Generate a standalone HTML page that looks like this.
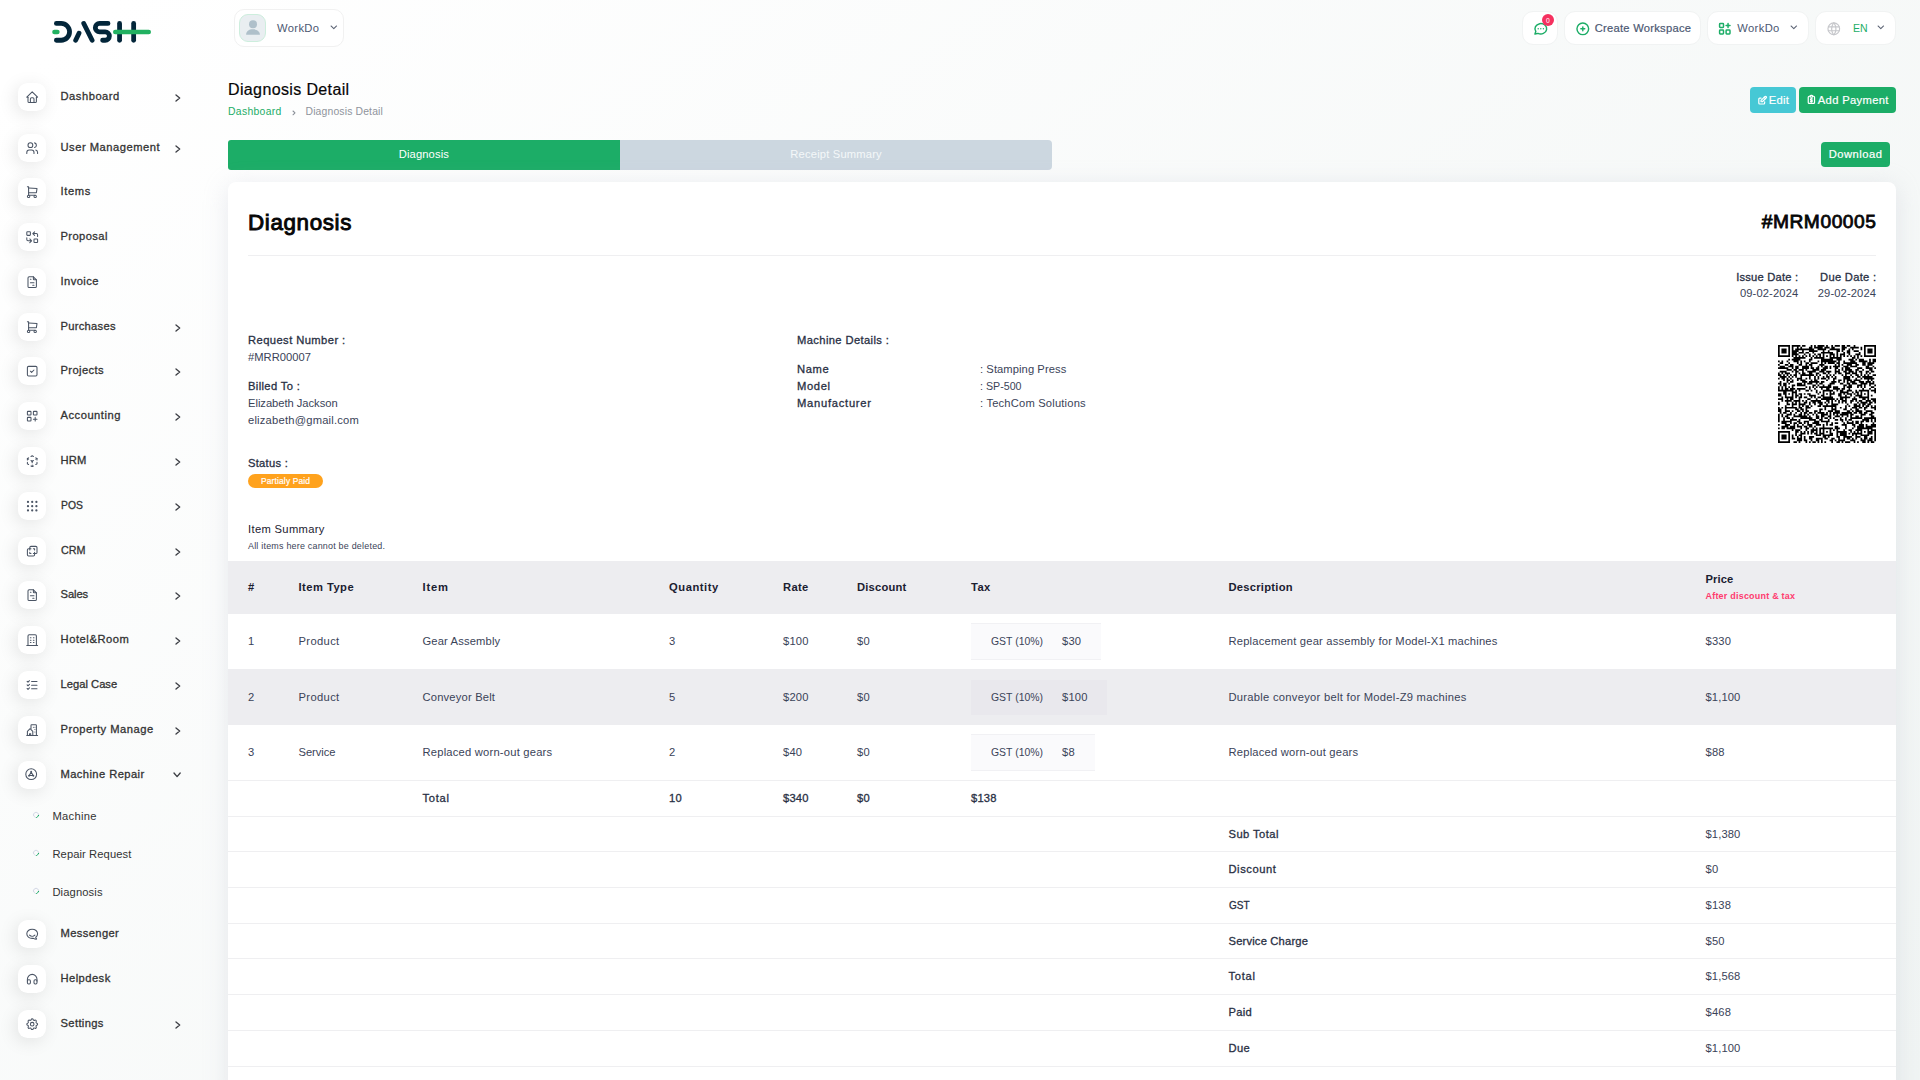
<!DOCTYPE html>
<html lang="en"><head><meta charset="utf-8"><title>Diagnosis Detail</title><style>
*{margin:0;padding:0;box-sizing:content-box}
html,body{width:1920px;height:1080px;overflow:hidden}
body{position:relative;font-family:"Liberation Sans", "DejaVu Sans", sans-serif;background:linear-gradient(141.55deg,rgba(240,244,243,0) 3.46%,#f0f4f3 99.86%),#fff;color:#3a4358;-webkit-font-smoothing:antialiased}
ul{list-style:none}
a{text-decoration:none}
.t{position:absolute;white-space:nowrap;font-weight:400;font-style:normal;display:block}
.mic{background:#fff;border-radius:9.6px;box-shadow:-2.4px 3.2px 18.4px rgba(0,0,0,.1)}
.hbtn{background:#fff;border-radius:10px;border:1px solid #f1f1f1;box-sizing:border-box}
.nb{border-color:#f1f3f3;border-radius:11px}
.cardbg{background:#fff;border-radius:8px;box-shadow:0 4.8px 24px rgba(182,186,203,.3)}
</style></head>
<body>
<nav class="sidebar">
<a class="brand"><svg role="img" aria-label="DASH" style="position:absolute;left:45px;top:14px" width="115" height="36" viewBox="0 0 1920 601"><g fill="none" stroke-linecap="round" stroke-linejoin="round" stroke-width="80" stroke="#03263a"><path d="M190 158H270A140 140 0 0 1 270 438H190"/><path d="M647 158L787 438"/><path d="M568 320L512 438"/><path d="M1052 158H910A70 70 0 0 0 910 298H1005A70 70 0 0 1 1005 438H962"/><path d="M1245 158V438"/><path d="M1480 158V438"/></g><g fill="none" stroke-linecap="round" stroke-width="76" stroke="#22b161"><path d="M158 300H207"/><path d="M1173 300H1732"/></g></svg></a>
<ul class="menu">
<li>
<div class="mic" style="position:absolute;left:18.00px;top:83.00px;width:28.00px;height:28.00px;"><svg style="position:absolute;left:6.85px;top:6.85px;" width="14.40" height="14.40" viewBox="0 0 24 24" fill="none" stroke="#4b5565" stroke-width="1.75" stroke-linecap="round" stroke-linejoin="round"><path d="M5 12H3l9-9 9 9h-2"/><path d="M5 12v7a2 2 0 0 0 2 2h10a2 2 0 0 0 2-2v-7"/><path d="M9 21v-6a2 2 0 0 1 2-2h2a2 2 0 0 1 2 2v6"/></svg></div>
<span class="t" style="top:88.00px;font-size:11.20px;line-height:17px;-webkit-text-stroke:0.30px;color:#333333;left:60.50px;letter-spacing:0.510px;">Dashboard</span>
<svg style="position:absolute;left:173.60px;top:92.80px" width="7.70" height="10.00" viewBox="0 0 7.70 10.00" fill="none" stroke="#3d3f45" stroke-width="1.35" stroke-linecap="round" stroke-linejoin="round"><path d="M2.00 2.00L5.70 5.00L2.00 8.00"/></svg>
</li>
<li>
<div class="mic" style="position:absolute;left:18.00px;top:134.00px;width:28.00px;height:28.00px;"><svg style="position:absolute;left:6.85px;top:6.85px;" width="14.40" height="14.40" viewBox="0 0 24 24" fill="none" stroke="#4b5565" stroke-width="1.75" stroke-linecap="round" stroke-linejoin="round"><circle cx="9" cy="7" r="4"/><path d="M3 21v-2a4 4 0 0 1 4-4h4a4 4 0 0 1 4 4v2"/><path d="M16 3.13a4 4 0 0 1 0 7.75"/><path d="M21 21v-2a4 4 0 0 0-3-3.85"/></svg></div>
<span class="t" style="top:139.00px;font-size:11.20px;line-height:17px;-webkit-text-stroke:0.30px;color:#333333;left:60.50px;letter-spacing:0.507px;">User Management</span>
<svg style="position:absolute;left:173.60px;top:143.80px" width="7.70" height="10.00" viewBox="0 0 7.70 10.00" fill="none" stroke="#3d3f45" stroke-width="1.35" stroke-linecap="round" stroke-linejoin="round"><path d="M2.00 2.00L5.70 5.00L2.00 8.00"/></svg>
</li>
<li>
<div class="mic" style="position:absolute;left:18.00px;top:178.00px;width:28.00px;height:28.00px;"><svg style="position:absolute;left:6.85px;top:6.85px;" width="14.40" height="14.40" viewBox="0 0 24 24" fill="none" stroke="#4b5565" stroke-width="1.75" stroke-linecap="round" stroke-linejoin="round"><circle cx="6" cy="19" r="2"/><circle cx="17" cy="19" r="2"/><path d="M17 17H6V3H4"/><path d="M6 5l14 1-1 7H6"/></svg></div>
<span class="t" style="top:183.00px;font-size:11.20px;line-height:17px;-webkit-text-stroke:0.30px;color:#333333;left:60.50px;letter-spacing:0.609px;">Items</span>
</li>
<li>
<div class="mic" style="position:absolute;left:18.00px;top:223.00px;width:28.00px;height:28.00px;"><svg style="position:absolute;left:6.85px;top:6.85px;" width="14.40" height="14.40" viewBox="0 0 24 24" fill="none" stroke="#4b5565" stroke-width="1.75" stroke-linecap="round" stroke-linejoin="round"><rect x="3" y="3" width="6" height="6" rx="1"/><rect x="15" y="15" width="6" height="6" rx="1"/><path d="M21 11V8a2 2 0 0 0-2-2h-6l3 3m0-6l-3 3"/><path d="M3 13v3a2 2 0 0 0 2 2h6l-3-3m0 6l3-3"/></svg></div>
<span class="t" style="top:228.00px;font-size:11.20px;line-height:17px;-webkit-text-stroke:0.30px;color:#333333;left:60.50px;letter-spacing:0.404px;">Proposal</span>
</li>
<li>
<div class="mic" style="position:absolute;left:18.00px;top:268.00px;width:28.00px;height:28.00px;"><svg style="position:absolute;left:6.85px;top:6.85px;" width="14.40" height="14.40" viewBox="0 0 24 24" fill="none" stroke="#4b5565" stroke-width="1.75" stroke-linecap="round" stroke-linejoin="round"><path d="M14 3v4a1 1 0 0 0 1 1h4"/><path d="M17 21H7a2 2 0 0 1-2-2V5a2 2 0 0 1 2-2h7l5 5v11a2 2 0 0 1-2 2z"/><path d="M9 7h1"/><path d="M9 13h6"/><path d="M13 17h2"/></svg></div>
<span class="t" style="top:273.00px;font-size:11.20px;line-height:17px;-webkit-text-stroke:0.30px;color:#333333;left:60.50px;letter-spacing:0.429px;">Invoice</span>
</li>
<li>
<div class="mic" style="position:absolute;left:18.00px;top:313.00px;width:28.00px;height:28.00px;"><svg style="position:absolute;left:6.85px;top:6.85px;" width="14.40" height="14.40" viewBox="0 0 24 24" fill="none" stroke="#4b5565" stroke-width="1.75" stroke-linecap="round" stroke-linejoin="round"><circle cx="6" cy="19" r="2"/><circle cx="17" cy="19" r="2"/><path d="M17 17H6V3H4"/><path d="M6 5l14 1-1 7H6"/></svg></div>
<span class="t" style="top:318.00px;font-size:11.20px;line-height:17px;-webkit-text-stroke:0.30px;color:#333333;left:60.50px;letter-spacing:0.273px;">Purchases</span>
<svg style="position:absolute;left:173.60px;top:322.80px" width="7.70" height="10.00" viewBox="0 0 7.70 10.00" fill="none" stroke="#3d3f45" stroke-width="1.35" stroke-linecap="round" stroke-linejoin="round"><path d="M2.00 2.00L5.70 5.00L2.00 8.00"/></svg>
</li>
<li>
<div class="mic" style="position:absolute;left:18.00px;top:357.00px;width:28.00px;height:28.00px;"><svg style="position:absolute;left:6.85px;top:6.85px;" width="14.40" height="14.40" viewBox="0 0 24 24" fill="none" stroke="#4b5565" stroke-width="1.75" stroke-linecap="round" stroke-linejoin="round"><rect x="4" y="4" width="16" height="16" rx="2"/><path d="M9 12l2 2 4-4"/></svg></div>
<span class="t" style="top:362.00px;font-size:11.20px;line-height:17px;-webkit-text-stroke:0.30px;color:#333333;left:60.50px;letter-spacing:0.389px;">Projects</span>
<svg style="position:absolute;left:173.60px;top:366.80px" width="7.70" height="10.00" viewBox="0 0 7.70 10.00" fill="none" stroke="#3d3f45" stroke-width="1.35" stroke-linecap="round" stroke-linejoin="round"><path d="M2.00 2.00L5.70 5.00L2.00 8.00"/></svg>
</li>
<li>
<div class="mic" style="position:absolute;left:18.00px;top:402.00px;width:28.00px;height:28.00px;"><svg style="position:absolute;left:6.85px;top:6.85px;" width="14.40" height="14.40" viewBox="0 0 24 24" fill="none" stroke="#4b5565" stroke-width="1.75" stroke-linecap="round" stroke-linejoin="round"><rect x="4" y="4" width="6" height="6" rx="1"/><rect x="14" y="4" width="6" height="6" rx="1"/><rect x="4" y="14" width="6" height="6" rx="1"/><path d="M14 17h6m-3-3v6"/></svg></div>
<span class="t" style="top:407.00px;font-size:11.20px;line-height:17px;-webkit-text-stroke:0.30px;color:#333333;left:60.50px;letter-spacing:0.505px;">Accounting</span>
<svg style="position:absolute;left:173.60px;top:411.80px" width="7.70" height="10.00" viewBox="0 0 7.70 10.00" fill="none" stroke="#3d3f45" stroke-width="1.35" stroke-linecap="round" stroke-linejoin="round"><path d="M2.00 2.00L5.70 5.00L2.00 8.00"/></svg>
</li>
<li>
<div class="mic" style="position:absolute;left:18.00px;top:447.00px;width:28.00px;height:28.00px;"><svg style="position:absolute;left:6.85px;top:6.85px;" width="14.40" height="14.40" viewBox="0 0 24 24" fill="none" stroke="#4b5565" stroke-width="1.75" stroke-linecap="round" stroke-linejoin="round"><path d="M6 17.6l-2-1.1V14"/><path d="M4 10V7.5l2-1.1"/><path d="M10 4.1L12 3l2 1.1"/><path d="M18 6.4l2 1.1V10"/><path d="M20 14v2.5l-2 1.12"/><path d="M14 19.9L12 21l-2-1.1"/><path d="M12 12l2-1.1"/><path d="M18 8.600l2-1.1"/><path d="M12 12v2.5"/><path d="M12 18.5V21"/><path d="M12 12l-2-1.12"/><path d="M6 8.600L4 7.500"/></svg></div>
<span class="t" style="top:452.00px;font-size:11.20px;line-height:17px;-webkit-text-stroke:0.30px;color:#333333;left:60.50px;letter-spacing:0.130px;">HRM</span>
<svg style="position:absolute;left:173.60px;top:456.80px" width="7.70" height="10.00" viewBox="0 0 7.70 10.00" fill="none" stroke="#3d3f45" stroke-width="1.35" stroke-linecap="round" stroke-linejoin="round"><path d="M2.00 2.00L5.70 5.00L2.00 8.00"/></svg>
</li>
<li>
<div class="mic" style="position:absolute;left:18.00px;top:492.00px;width:28.00px;height:28.00px;"><svg style="position:absolute;left:6.85px;top:6.85px;" width="14.40" height="14.40" viewBox="0 0 24 24" fill="none" stroke="#4b5565" stroke-width="1.75" stroke-linecap="round" stroke-linejoin="round"><circle cx="5" cy="5" r="1"/><circle cx="12" cy="5" r="1"/><circle cx="19" cy="5" r="1"/><circle cx="5" cy="12" r="1"/><circle cx="12" cy="12" r="1"/><circle cx="19" cy="12" r="1"/><circle cx="5" cy="19" r="1"/><circle cx="12" cy="19" r="1"/><circle cx="19" cy="19" r="1"/></svg></div>
<span class="t" style="top:497.00px;font-size:11.20px;line-height:17px;-webkit-text-stroke:0.30px;color:#333333;left:60.50px;transform:scaleX(0.9240);transform-origin:0 50%;">POS</span>
<svg style="position:absolute;left:173.60px;top:501.80px" width="7.70" height="10.00" viewBox="0 0 7.70 10.00" fill="none" stroke="#3d3f45" stroke-width="1.35" stroke-linecap="round" stroke-linejoin="round"><path d="M2.00 2.00L5.70 5.00L2.00 8.00"/></svg>
</li>
<li>
<div class="mic" style="position:absolute;left:18.00px;top:537.00px;width:28.00px;height:28.00px;"><svg style="position:absolute;left:6.85px;top:6.85px;" width="14.40" height="14.40" viewBox="0 0 24 24" fill="none" stroke="#4b5565" stroke-width="1.75" stroke-linecap="round" stroke-linejoin="round"><path d="M16 16v2a2 2 0 0 1-2 2H6a2 2 0 0 1-2-2v-8a2 2 0 0 1 2-2h2V6a2 2 0 0 1 2-2h8a2 2 0 0 1 2 2v8a2 2 0 0 1-2 2h-2"/><path d="M10 8H8v2"/><path d="M8 14v2h2"/><path d="M14 8h2v2"/><path d="M16 14v2h-2"/></svg></div>
<span class="t" style="top:542.00px;font-size:11.20px;line-height:17px;-webkit-text-stroke:0.30px;color:#333333;left:60.50px;transform:scaleX(0.9632);transform-origin:0 50%;">CRM</span>
<svg style="position:absolute;left:173.60px;top:546.80px" width="7.70" height="10.00" viewBox="0 0 7.70 10.00" fill="none" stroke="#3d3f45" stroke-width="1.35" stroke-linecap="round" stroke-linejoin="round"><path d="M2.00 2.00L5.70 5.00L2.00 8.00"/></svg>
</li>
<li>
<div class="mic" style="position:absolute;left:18.00px;top:581.00px;width:28.00px;height:28.00px;"><svg style="position:absolute;left:6.85px;top:6.85px;" width="14.40" height="14.40" viewBox="0 0 24 24" fill="none" stroke="#4b5565" stroke-width="1.75" stroke-linecap="round" stroke-linejoin="round"><path d="M14 3v4a1 1 0 0 0 1 1h4"/><path d="M17 21H7a2 2 0 0 1-2-2V5a2 2 0 0 1 2-2h7l5 5v11a2 2 0 0 1-2 2z"/><path d="M9 7h1"/><path d="M9 13h6"/><path d="M13 17h2"/></svg></div>
<span class="t" style="top:586.00px;font-size:11.20px;line-height:17px;-webkit-text-stroke:0.30px;color:#333333;left:60.50px;letter-spacing:-0.069px;">Sales</span>
<svg style="position:absolute;left:173.60px;top:590.80px" width="7.70" height="10.00" viewBox="0 0 7.70 10.00" fill="none" stroke="#3d3f45" stroke-width="1.35" stroke-linecap="round" stroke-linejoin="round"><path d="M2.00 2.00L5.70 5.00L2.00 8.00"/></svg>
</li>
<li>
<div class="mic" style="position:absolute;left:18.00px;top:626.00px;width:28.00px;height:28.00px;"><svg style="position:absolute;left:6.85px;top:6.85px;" width="14.40" height="14.40" viewBox="0 0 24 24" fill="none" stroke="#4b5565" stroke-width="1.75" stroke-linecap="round" stroke-linejoin="round"><path d="M3 21h18"/><path d="M9 8h1"/><path d="M9 12h1"/><path d="M9 16h1"/><path d="M14 8h1"/><path d="M14 12h1"/><path d="M14 16h1"/><path d="M5 21V5a2 2 0 0 1 2-2h10a2 2 0 0 1 2 2v16"/></svg></div>
<span class="t" style="top:631.00px;font-size:11.20px;line-height:17px;-webkit-text-stroke:0.30px;color:#333333;left:60.50px;letter-spacing:0.556px;">Hotel&amp;Room</span>
<svg style="position:absolute;left:173.60px;top:635.80px" width="7.70" height="10.00" viewBox="0 0 7.70 10.00" fill="none" stroke="#3d3f45" stroke-width="1.35" stroke-linecap="round" stroke-linejoin="round"><path d="M2.00 2.00L5.70 5.00L2.00 8.00"/></svg>
</li>
<li>
<div class="mic" style="position:absolute;left:18.00px;top:671.00px;width:28.00px;height:28.00px;"><svg style="position:absolute;left:6.85px;top:6.85px;" width="14.40" height="14.40" viewBox="0 0 24 24" fill="none" stroke="#4b5565" stroke-width="1.75" stroke-linecap="round" stroke-linejoin="round"><path d="M3.5 5.5L5 7l2.500-2.500"/><path d="M3.5 11.5L5 13l2.500-2.500"/><path d="M3.5 17.5L5 19l2.500-2.500"/><path d="M11 6h9"/><path d="M11 12h9"/><path d="M11 18h9"/></svg></div>
<span class="t" style="top:676.00px;font-size:11.20px;line-height:17px;-webkit-text-stroke:0.30px;color:#333333;left:60.50px;letter-spacing:0.011px;">Legal Case</span>
<svg style="position:absolute;left:173.60px;top:680.80px" width="7.70" height="10.00" viewBox="0 0 7.70 10.00" fill="none" stroke="#3d3f45" stroke-width="1.35" stroke-linecap="round" stroke-linejoin="round"><path d="M2.00 2.00L5.70 5.00L2.00 8.00"/></svg>
</li>
<li>
<div class="mic" style="position:absolute;left:18.00px;top:716.00px;width:28.00px;height:28.00px;"><svg style="position:absolute;left:6.85px;top:6.85px;" width="14.40" height="14.40" viewBox="0 0 24 24" fill="none" stroke="#4b5565" stroke-width="1.75" stroke-linecap="round" stroke-linejoin="round"><path d="M3 21h18"/><path d="M19 21V4a1 1 0 0 0-1-1h-7a1 1 0 0 0-1 1v5"/><path d="M4 21v-7l4.500-4.500L13 14v7"/><path d="M7.500 21v-3h2v3"/><path d="M14 7h.01"/><path d="M16.500 7h.01"/><path d="M16.500 11h.01"/><path d="M16.500 15h.01"/></svg></div>
<span class="t" style="top:721.00px;font-size:11.20px;line-height:17px;-webkit-text-stroke:0.30px;color:#333333;left:60.50px;letter-spacing:0.487px;">Property Manage</span>
<svg style="position:absolute;left:173.60px;top:725.80px" width="7.70" height="10.00" viewBox="0 0 7.70 10.00" fill="none" stroke="#3d3f45" stroke-width="1.35" stroke-linecap="round" stroke-linejoin="round"><path d="M2.00 2.00L5.70 5.00L2.00 8.00"/></svg>
</li>
<li>
<div class="mic" style="position:absolute;left:18.00px;top:761.00px;width:28.00px;height:28.00px;"><svg style="position:absolute;left:6.20px;top:6.00px;" width="14.40" height="14.40" viewBox="0 0 24 24" fill="none" stroke="#4b5565" stroke-width="1.75" stroke-linecap="round" stroke-linejoin="round"><circle cx="12" cy="12" r="9"/><path d="M12 8.500l-3.200 5.800h6.400z"/><circle cx="12" cy="8" r="0.700"/><circle cx="8.400" cy="14.500" r="0.700"/><circle cx="15.600" cy="14.500" r="0.700"/></svg></div>
<span class="t" style="top:766.00px;font-size:11.20px;line-height:17px;-webkit-text-stroke:0.30px;color:#333333;left:60.50px;letter-spacing:0.406px;">Machine Repair</span>
<svg style="position:absolute;left:171.50px;top:770.70px" width="10.20" height="7.60" viewBox="0 0 10.20 7.60" fill="none" stroke="#3d3f45" stroke-width="1.35" stroke-linecap="round" stroke-linejoin="round"><path d="M2.00 2.00L5.10 5.60L8.20 2.00"/></svg>
</li>
<li class="sub">
<div style="position:absolute;left:32.50px;top:812.40px;width:5.80px;height:5.80px;border-radius:50%;border:1px solid #d5d9e6;border-bottom-color:#1cad67;transform:rotate(-45deg);box-sizing:border-box;"></div>
<span class="t" style="top:808.00px;font-size:11.20px;line-height:17px;color:#333333;left:52.40px;letter-spacing:0.310px;">Machine</span>
</li>
<li class="sub">
<div style="position:absolute;left:32.50px;top:850.40px;width:5.80px;height:5.80px;border-radius:50%;border:1px solid #d5d9e6;border-bottom-color:#1cad67;transform:rotate(-45deg);box-sizing:border-box;"></div>
<span class="t" style="top:846.00px;font-size:11.20px;line-height:17px;color:#333333;left:52.40px;letter-spacing:0.094px;">Repair Request</span>
</li>
<li class="sub">
<div style="position:absolute;left:32.50px;top:888.40px;width:5.80px;height:5.80px;border-radius:50%;border:1px solid #d5d9e6;border-bottom-color:#1cad67;transform:rotate(-45deg);box-sizing:border-box;"></div>
<span class="t" style="top:884.00px;font-size:11.20px;line-height:17px;color:#333333;left:52.40px;letter-spacing:0.130px;">Diagnosis</span>
</li>
<li>
<div class="mic" style="position:absolute;left:18.00px;top:920.00px;width:28.00px;height:28.00px;"><svg style="position:absolute;left:6.85px;top:6.85px;" width="14.40" height="14.40" viewBox="0 0 24 24" fill="none" stroke="#4b5565" stroke-width="1.75" stroke-linecap="round" stroke-linejoin="round"><path d="M17.802 17.292s.077-.055.2-.149c1.843-1.425 3-3.490 3-5.789 0-4.286-4.030-7.764-9-7.764s-9 3.478-9 7.764c0 4.288 4.030 7.646 9 7.646.424 0 1.120-.028 2.088-.084 1.262.820 3.104 1.493 4.716 1.493.499 0 .734-.410.414-.828-.486-.596-1.156-1.551-1.416-2.290z"/><path d="M7.500 13.500c2.500 2.500 6.500 2.500 9 0"/></svg></div>
<span class="t" style="top:925.00px;font-size:11.20px;line-height:17px;-webkit-text-stroke:0.30px;color:#333333;left:60.50px;letter-spacing:0.372px;">Messenger</span>
</li>
<li>
<div class="mic" style="position:absolute;left:18.00px;top:965.00px;width:28.00px;height:28.00px;"><svg style="position:absolute;left:6.85px;top:6.85px;" width="14.40" height="14.40" viewBox="0 0 24 24" fill="none" stroke="#4b5565" stroke-width="1.75" stroke-linecap="round" stroke-linejoin="round"><rect x="4" y="13" rx="2" width="5" height="7"/><rect x="15" y="13" rx="2" width="5" height="7"/><path d="M4 15v-3a8 8 0 0 1 16 0v3"/></svg></div>
<span class="t" style="top:970.00px;font-size:11.20px;line-height:17px;-webkit-text-stroke:0.30px;color:#333333;left:60.50px;letter-spacing:0.445px;">Helpdesk</span>
</li>
<li>
<div class="mic" style="position:absolute;left:18.00px;top:1010.00px;width:28.00px;height:28.00px;"><svg style="position:absolute;left:6.85px;top:6.85px;" width="14.40" height="14.40" viewBox="0 0 24 24" fill="none" stroke="#4b5565" stroke-width="1.75" stroke-linecap="round" stroke-linejoin="round"><path d="M10.325 4.317c.426-1.756 2.924-1.756 3.350 0a1.724 1.724 0 0 0 2.573 1.066c1.543-.940 3.310.826 2.370 2.370a1.724 1.724 0 0 0 1.065 2.572c1.756.426 1.756 2.924 0 3.350a1.724 1.724 0 0 0-1.066 2.573c.940 1.543-.826 3.310-2.370 2.370a1.724 1.724 0 0 0-2.572 1.065c-.426 1.756-2.924 1.756-3.350 0a1.724 1.724 0 0 0-2.573-1.066c-1.543.940-3.310-.826-2.370-2.370a1.724 1.724 0 0 0-1.065-2.572c-1.756-.426-1.756-2.924 0-3.350a1.724 1.724 0 0 0 1.066-2.573c-.940-1.543.826-3.310 2.370-2.370 1 .608 2.296.070 2.572-1.065z"/><circle cx="12" cy="12" r="3"/></svg></div>
<span class="t" style="top:1015.00px;font-size:11.20px;line-height:17px;-webkit-text-stroke:0.30px;color:#333333;left:60.50px;letter-spacing:0.361px;">Settings</span>
<svg style="position:absolute;left:173.60px;top:1019.80px" width="7.70" height="10.00" viewBox="0 0 7.70 10.00" fill="none" stroke="#3d3f45" stroke-width="1.35" stroke-linecap="round" stroke-linejoin="round"><path d="M2.00 2.00L5.70 5.00L2.00 8.00"/></svg>
</li>
</ul></nav>
<header class="topbar">
<div class="hbtn" style="position:absolute;left:234.30px;top:9.20px;width:109.70px;height:37.40px;border-radius:10px;"></div>
<div style="position:absolute;left:239.00px;top:14.00px;width:27.00px;height:27.60px;border-radius:9px;background:#e9eef1;border:1px solid #cdeedd;box-sizing:border-box;overflow:hidden"><svg style="position:absolute;left:3.5px;top:4.15px" width="18" height="18" viewBox="0 0 24 24" fill="#afc0ca"><circle cx="12" cy="7" r="5.300"/><path d="M2.800 21.100c0-4.600 3.600-7.300 9.200-7.300s9.200 2.700 9.200 7.300z"/></svg></div>
<span class="t" style="top:20.00px;font-size:11.20px;line-height:17px;color:#4c5872;left:277.00px;letter-spacing:0.359px;">WorkDo</span>
<svg style="position:absolute;left:328.50px;top:24.10px" width="9.60" height="6.70" viewBox="0 0 9.60 6.70" fill="none" stroke="#596172" stroke-width="1.05" stroke-linecap="round" stroke-linejoin="round"><path d="M2.00 2.00L4.80 4.70L7.60 2.00"/></svg>
<div class="hbtn nb" style="position:absolute;left:1522.00px;top:11.00px;width:36.00px;height:34.00px;"></div>
<svg style="position:absolute;left:1532.60px;top:20.60px;" width="15.60" height="15.60" viewBox="0 0 24 24" fill="none" stroke="#1cad67" stroke-width="2.2" stroke-linecap="round" stroke-linejoin="round"><path d="M3 20l1.300-3.900A9 8 0 1 1 7.700 19L3 20"/><path d="M8 12h.01"/><path d="M12 12h.01"/><path d="M16 12h.01"/></svg>
<div style="position:absolute;left:1542.00px;top:14.40px;width:12.00px;height:12.00px;border-radius:50%;background:#f5315f;"></div>
<span class="t" style="top:15.91px;font-size:6.80px;line-height:10px;color:#fff;left:1248.05px;width:600px;text-align:center;letter-spacing:0.109px;"><span>0</span></span>
<div class="hbtn nb" style="position:absolute;left:1564.00px;top:11.00px;width:137.00px;height:34.00px;"></div>
<svg style="position:absolute;left:1574.60px;top:20.70px;" width="15.60" height="15.60" viewBox="0 0 24 24" fill="none" stroke="#1cad67" stroke-width="2.2" stroke-linecap="round" stroke-linejoin="round"><circle cx="12" cy="12" r="9"/><path d="M9 12h6"/><path d="M12 9v6"/></svg>
<span class="t" style="top:20.00px;font-size:11.20px;line-height:17px;-webkit-text-stroke:0.20px;color:#4c5872;left:1594.70px;letter-spacing:0.257px;">Create Workspace</span>
<div class="hbtn nb" style="position:absolute;left:1707.00px;top:11.00px;width:102.00px;height:34.00px;"></div>
<svg style="position:absolute;left:1717.20px;top:20.50px;" width="15.60" height="15.60" viewBox="0 0 24 24" fill="none" stroke="#1cad67" stroke-width="2.3" stroke-linecap="round" stroke-linejoin="round"><rect x="4" y="4" width="6" height="6" rx="1"/><rect x="4" y="14" width="6" height="6" rx="1"/><rect x="14" y="14" width="6" height="6" rx="1"/><path d="M14 7h6m-3-3v6"/></svg>
<span class="t" style="top:20.00px;font-size:11.20px;line-height:17px;color:#4c5872;left:1737.30px;letter-spacing:0.359px;">WorkDo</span>
<svg style="position:absolute;left:1789.10px;top:24.10px" width="9.60" height="6.70" viewBox="0 0 9.60 6.70" fill="none" stroke="#596172" stroke-width="1.05" stroke-linecap="round" stroke-linejoin="round"><path d="M2.00 2.00L4.80 4.70L7.60 2.00"/></svg>
<div class="hbtn nb" style="position:absolute;left:1815.00px;top:11.00px;width:80.60px;height:34.00px;"></div>
<svg style="position:absolute;left:1825.50px;top:20.60px;" width="15.60" height="15.60" viewBox="0 0 24 24" fill="none" stroke="#c6c7cb" stroke-width="1.8" stroke-linecap="round" stroke-linejoin="round"><circle cx="12" cy="12" r="9"/><path d="M3.600 9h16.800"/><path d="M3.600 15h16.800"/><path d="M11.500 3a17 17 0 0 0 0 18"/><path d="M12.500 3a17 17 0 0 1 0 18"/></svg>
<span class="t" style="top:20.00px;font-size:11.20px;line-height:17px;color:#1cad67;left:1852.50px;transform:scaleX(0.9417);transform-origin:0 50%;">EN</span>
<svg style="position:absolute;left:1875.60px;top:24.10px" width="9.60" height="6.70" viewBox="0 0 9.60 6.70" fill="none" stroke="#596172" stroke-width="1.05" stroke-linecap="round" stroke-linejoin="round"><path d="M2.00 2.00L4.80 4.70L7.60 2.00"/></svg>
</header>
<main>
<h4 class="t" style="top:78.00px;font-size:16.00px;line-height:24px;-webkit-text-stroke:0.20px;color:#060606;left:228.00px;letter-spacing:0.370px;">Diagnosis Detail</h4>
<a class="t" style="top:103.61px;font-size:10.40px;line-height:16px;color:#1cad67;left:228.00px;letter-spacing:0.309px;">Dashboard</a>
<svg style="position:absolute;left:290.60px;top:108.50px" width="6.00" height="7.80" viewBox="0 0 6.00 7.80" fill="none" stroke="#8a8f98" stroke-width="1.05" stroke-linecap="round" stroke-linejoin="round"><path d="M2.00 2.00L4.00 3.90L2.00 5.80"/></svg>
<span class="t" style="top:103.61px;font-size:10.40px;line-height:16px;color:#8f949c;left:305.50px;letter-spacing:0.152px;">Diagnosis Detail</span>
<div style="position:absolute;left:1750.00px;top:87.00px;width:46.00px;height:26.00px;background:#46c8d5;border-radius:4px;"></div>
<svg style="position:absolute;left:1757.00px;top:94.60px;" width="10.80" height="10.80" viewBox="0 0 24 24" fill="none" stroke="#fff" stroke-width="2.7" stroke-linecap="round" stroke-linejoin="round"><path d="M9 7H6a2 2 0 0 0-2 2v9a2 2 0 0 0 2 2h9a2 2 0 0 0 2-2v-3"/><path d="M9 15h3l8.500-8.500a1.500 1.500 0 0 0-3-3L9 12v3"/><path d="M16 5l3 3"/></svg>
<span class="t" style="top:91.80px;font-size:11.20px;line-height:17px;-webkit-text-stroke:0.20px;color:#fff;left:1768.80px;letter-spacing:0.238px;">Edit</span>
<div style="position:absolute;left:1799.00px;top:87.00px;width:97.00px;height:26.00px;background:#1cad67;border-radius:4px;"></div>
<svg style="position:absolute;left:1806.20px;top:94.40px;" width="10.80" height="10.80" viewBox="0 0 24 24" fill="none" stroke="#fff" stroke-width="2.7" stroke-linecap="round" stroke-linejoin="round"><path d="M9 5H7a2 2 0 0 0-2 2v12a2 2 0 0 0 2 2h10a2 2 0 0 0 2-2V7a2 2 0 0 0-2-2h-2"/><rect x="9" y="3" width="6" height="4" rx="2"/><path d="M14 11h-2.500a1.500 1.500 0 0 0 0 3h1a1.500 1.500 0 0 1 0 3H10"/><path d="M12 17v1m0-8v1"/></svg>
<span class="t" style="top:91.80px;font-size:11.20px;line-height:17px;-webkit-text-stroke:0.20px;color:#fff;left:1817.80px;letter-spacing:0.345px;">Add Payment</span>
<div style="position:absolute;left:228.00px;top:140.00px;width:392.00px;height:30.00px;background:#1cad67;border-radius:3px 0 0 3px;"></div>
<div style="position:absolute;left:620.00px;top:140.00px;width:432.00px;height:30.00px;background:#ccd7e0;border-radius:0 4px 4px 0;"></div>
<span class="t" style="top:146.00px;font-size:11.20px;line-height:17px;color:#fff;left:123.87px;width:600px;text-align:center;letter-spacing:0.130px;"><span>Diagnosis</span></span>
<span class="t" style="top:146.00px;font-size:11.20px;line-height:17px;color:#f4f7f9;left:536.09px;width:600px;text-align:center;letter-spacing:0.173px;"><span>Receipt Summary</span></span>
<div style="position:absolute;left:1821.00px;top:142.00px;width:69.00px;height:25.00px;background:#1cad67;border-radius:4px;"></div>
<span class="t" style="top:146.21px;font-size:11.20px;line-height:17px;-webkit-text-stroke:0.20px;color:#fff;left:1555.66px;width:600px;text-align:center;letter-spacing:0.523px;"><span>Download</span></span>
<section class="card">
<div class="cardbg" style="position:absolute;left:228.00px;top:182.00px;width:1668.00px;height:920.00px;"></div>
<h2 class="t" style="top:206.00px;font-size:22.40px;line-height:34px;-webkit-text-stroke:0.94px;color:#060606;left:248.00px;letter-spacing:0.628px;">Diagnosis</h2>
<h3 class="t" style="top:207.00px;font-size:19.20px;line-height:29px;-webkit-text-stroke:0.81px;color:#060606;right:43.44px;letter-spacing:0.557px;">#MRM00005</h3>
<div style="position:absolute;left:248.00px;top:255.00px;width:1628.00px;height:1.00px;background:#efeff1;"></div>
<span class="t" style="top:268.71px;font-size:11.20px;line-height:17px;-webkit-text-stroke:0.30px;color:#293044;right:121.58px;letter-spacing:0.216px;">Issue Date :</span>
<span class="t" style="top:284.71px;font-size:11.20px;line-height:17px;color:#3a4358;right:121.69px;letter-spacing:0.114px;">09-02-2024</span>
<span class="t" style="top:268.71px;font-size:11.20px;line-height:17px;-webkit-text-stroke:0.30px;color:#293044;right:43.73px;letter-spacing:0.272px;">Due Date :</span>
<span class="t" style="top:284.71px;font-size:11.20px;line-height:17px;color:#3a4358;right:43.89px;letter-spacing:0.114px;">29-02-2024</span>
<span class="t" style="top:332.21px;font-size:11.20px;line-height:17px;-webkit-text-stroke:0.30px;color:#293044;left:248.00px;letter-spacing:0.428px;">Request Number :</span>
<span class="t" style="top:349.21px;font-size:11.20px;line-height:17px;color:#3a4358;left:248.00px;letter-spacing:0.031px;">#MRR00007</span>
<span class="t" style="top:378.21px;font-size:11.20px;line-height:17px;-webkit-text-stroke:0.30px;color:#293044;left:248.00px;letter-spacing:0.351px;">Billed To :</span>
<span class="t" style="top:395.21px;font-size:11.20px;line-height:17px;color:#3a4358;left:248.00px;letter-spacing:-0.035px;">Elizabeth Jackson</span>
<span class="t" style="top:412.21px;font-size:11.20px;line-height:17px;color:#3a4358;left:248.00px;letter-spacing:0.208px;">elizabeth@gmail.com</span>
<span class="t" style="top:455.21px;font-size:11.20px;line-height:17px;-webkit-text-stroke:0.30px;color:#293044;left:248.00px;letter-spacing:0.260px;">Status :</span>
<div style="position:absolute;left:248.00px;top:474.00px;width:75.00px;height:14.00px;background:#ffa21d;border-radius:7px;"></div>
<span class="t" style="top:474.80px;font-size:8.40px;line-height:13px;-webkit-text-stroke:0.20px;color:#fff;left:-14.42px;width:600px;text-align:center;letter-spacing:0.165px;"><span>Partialy Paid</span></span>
<span class="t" style="top:331.80px;font-size:11.20px;line-height:17px;-webkit-text-stroke:0.30px;color:#293044;left:797.00px;letter-spacing:0.380px;">Machine Details :</span>
<span class="t" style="top:360.80px;font-size:11.20px;line-height:17px;-webkit-text-stroke:0.30px;color:#293044;left:797.00px;letter-spacing:0.633px;">Name</span>
<span class="t" style="top:360.80px;font-size:11.20px;line-height:17px;color:#3a4358;left:980.00px;letter-spacing:0.070px;">: Stamping Press</span>
<span class="t" style="top:377.80px;font-size:11.20px;line-height:17px;-webkit-text-stroke:0.30px;color:#293044;left:797.00px;letter-spacing:0.637px;">Model</span>
<span class="t" style="top:377.80px;font-size:11.20px;line-height:17px;color:#3a4358;left:980.00px;transform:scaleX(0.9530);transform-origin:0 50%;">: SP-500</span>
<span class="t" style="top:394.80px;font-size:11.20px;line-height:17px;-webkit-text-stroke:0.30px;color:#293044;left:797.00px;letter-spacing:0.736px;">Manufacturer</span>
<span class="t" style="top:394.80px;font-size:11.20px;line-height:17px;color:#3a4358;left:980.00px;letter-spacing:0.181px;">: TechCom Solutions</span>
<svg role="img" aria-label="QR code" style="position:absolute;left:1778px;top:345px" width="98" height="98" viewBox="0 0 57 57"><rect width="57" height="57" fill="#fff"/><path fill="#000" d="M0 0h7v1h-7zM8 0h5v1h-5zM14 0h2v1h-2zM19 0h1v1h-1zM21 0h1v1h-1zM23 0h4v1h-4zM28 0h1v1h-1zM31 0h1v1h-1zM33 0h3v1h-3zM37 0h2v1h-2zM40 0h2v1h-2zM44 0h1v1h-1zM50 0h7v1h-7zM0 1h1v1h-1zM6 1h1v1h-1zM8 1h1v1h-1zM11 1h1v1h-1zM13 1h1v1h-1zM18 1h2v1h-2zM21 1h5v1h-5zM27 1h3v1h-3zM31 1h2v1h-2zM37 1h3v1h-3zM42 1h5v1h-5zM48 1h1v1h-1zM50 1h1v1h-1zM56 1h1v1h-1zM0 2h1v1h-1zM2 2h3v1h-3zM6 2h1v1h-1zM8 2h1v1h-1zM10 2h11v1h-11zM23 2h5v1h-5zM30 2h6v1h-6zM37 2h2v1h-2zM41 2h1v1h-1zM43 2h1v1h-1zM48 2h1v1h-1zM50 2h1v1h-1zM52 2h3v1h-3zM56 2h1v1h-1zM0 3h1v1h-1zM2 3h3v1h-3zM6 3h1v1h-1zM8 3h4v1h-4zM14 3h1v1h-1zM18 3h5v1h-5zM26 3h1v1h-1zM29 3h1v1h-1zM34 3h2v1h-2zM37 3h1v1h-1zM40 3h2v1h-2zM44 3h3v1h-3zM50 3h1v1h-1zM52 3h3v1h-3zM56 3h1v1h-1zM0 4h1v1h-1zM2 4h3v1h-3zM6 4h1v1h-1zM8 4h3v1h-3zM12 4h3v1h-3zM16 4h2v1h-2zM20 4h1v1h-1zM25 4h7v1h-7zM34 4h1v1h-1zM38 4h1v1h-1zM40 4h2v1h-2zM47 4h1v1h-1zM50 4h1v1h-1zM52 4h3v1h-3zM56 4h1v1h-1zM0 5h1v1h-1zM6 5h1v1h-1zM8 5h4v1h-4zM15 5h1v1h-1zM18 5h1v1h-1zM21 5h1v1h-1zM23 5h2v1h-2zM26 5h1v1h-1zM30 5h3v1h-3zM34 5h1v1h-1zM36 5h3v1h-3zM41 5h1v1h-1zM45 5h3v1h-3zM50 5h1v1h-1zM56 5h1v1h-1zM0 6h7v1h-7zM8 6h1v1h-1zM10 6h1v1h-1zM12 6h1v1h-1zM14 6h1v1h-1zM16 6h1v1h-1zM18 6h1v1h-1zM20 6h1v1h-1zM22 6h1v1h-1zM24 6h1v1h-1zM26 6h1v1h-1zM28 6h1v1h-1zM30 6h1v1h-1zM32 6h1v1h-1zM34 6h1v1h-1zM36 6h1v1h-1zM38 6h1v1h-1zM40 6h1v1h-1zM42 6h1v1h-1zM44 6h1v1h-1zM46 6h1v1h-1zM48 6h1v1h-1zM50 6h7v1h-7zM9 7h7v1h-7zM19 7h1v1h-1zM21 7h6v1h-6zM30 7h7v1h-7zM43 7h2v1h-2zM46 7h1v1h-1zM6 8h1v1h-1zM8 8h5v1h-5zM18 8h2v1h-2zM25 8h7v1h-7zM34 8h3v1h-3zM41 8h3v1h-3zM45 8h1v1h-1zM47 8h3v1h-3zM53 8h1v1h-1zM55 8h2v1h-2zM0 9h1v1h-1zM2 9h1v1h-1zM5 9h1v1h-1zM9 9h3v1h-3zM13 9h1v1h-1zM15 9h1v1h-1zM18 9h1v1h-1zM23 9h1v1h-1zM25 9h9v1h-9zM35 9h1v1h-1zM38 9h1v1h-1zM42 9h3v1h-3zM47 9h5v1h-5zM53 9h1v1h-1zM55 9h2v1h-2zM1 10h2v1h-2zM6 10h1v1h-1zM11 10h1v1h-1zM13 10h1v1h-1zM16 10h2v1h-2zM19 10h4v1h-4zM25 10h1v1h-1zM27 10h1v1h-1zM29 10h4v1h-4zM34 10h2v1h-2zM38 10h8v1h-8zM49 10h2v1h-2zM52 10h4v1h-4zM0 11h1v1h-1zM4 11h2v1h-2zM7 11h2v1h-2zM12 11h2v1h-2zM16 11h1v1h-1zM18 11h2v1h-2zM24 11h3v1h-3zM33 11h1v1h-1zM35 11h1v1h-1zM37 11h1v1h-1zM40 11h3v1h-3zM45 11h2v1h-2zM49 11h2v1h-2zM52 11h3v1h-3zM1 12h3v1h-3zM6 12h3v1h-3zM10 12h2v1h-2zM14 12h4v1h-4zM19 12h1v1h-1zM23 12h1v1h-1zM25 12h1v1h-1zM27 12h2v1h-2zM30 12h1v1h-1zM32 12h4v1h-4zM38 12h3v1h-3zM42 12h4v1h-4zM51 12h2v1h-2zM55 12h1v1h-1zM0 13h6v1h-6zM8 13h1v1h-1zM10 13h2v1h-2zM14 13h4v1h-4zM19 13h2v1h-2zM22 13h2v1h-2zM26 13h3v1h-3zM30 13h1v1h-1zM33 13h2v1h-2zM37 13h1v1h-1zM39 13h3v1h-3zM46 13h3v1h-3zM51 13h4v1h-4zM56 13h1v1h-1zM5 14h3v1h-3zM9 14h2v1h-2zM12 14h3v1h-3zM16 14h1v1h-1zM20 14h4v1h-4zM25 14h3v1h-3zM33 14h1v1h-1zM35 14h1v1h-1zM37 14h1v1h-1zM39 14h4v1h-4zM45 14h2v1h-2zM49 14h1v1h-1zM53 14h2v1h-2zM1 15h4v1h-4zM8 15h1v1h-1zM10 15h2v1h-2zM14 15h1v1h-1zM17 15h5v1h-5zM24 15h3v1h-3zM28 15h3v1h-3zM33 15h3v1h-3zM38 15h2v1h-2zM41 15h3v1h-3zM45 15h1v1h-1zM47 15h2v1h-2zM51 15h2v1h-2zM54 15h2v1h-2zM0 16h1v1h-1zM2 16h1v1h-1zM4 16h3v1h-3zM10 16h1v1h-1zM12 16h1v1h-1zM14 16h2v1h-2zM18 16h2v1h-2zM22 16h2v1h-2zM26 16h2v1h-2zM29 16h1v1h-1zM33 16h1v1h-1zM35 16h2v1h-2zM39 16h3v1h-3zM43 16h3v1h-3zM48 16h1v1h-1zM51 16h1v1h-1zM53 16h1v1h-1zM0 17h2v1h-2zM3 17h1v1h-1zM5 17h1v1h-1zM7 17h1v1h-1zM9 17h2v1h-2zM13 17h8v1h-8zM22 17h1v1h-1zM24 17h1v1h-1zM28 17h1v1h-1zM30 17h1v1h-1zM32 17h1v1h-1zM37 17h1v1h-1zM39 17h1v1h-1zM42 17h1v1h-1zM45 17h2v1h-2zM48 17h1v1h-1zM50 17h1v1h-1zM52 17h1v1h-1zM55 17h2v1h-2zM1 18h4v1h-4zM6 18h1v1h-1zM8 18h1v1h-1zM10 18h1v1h-1zM13 18h1v1h-1zM18 18h1v1h-1zM21 18h1v1h-1zM23 18h1v1h-1zM26 18h1v1h-1zM28 18h2v1h-2zM31 18h1v1h-1zM33 18h1v1h-1zM38 18h4v1h-4zM43 18h1v1h-1zM46 18h2v1h-2zM49 18h6v1h-6zM0 19h1v1h-1zM2 19h2v1h-2zM5 19h1v1h-1zM7 19h1v1h-1zM11 19h3v1h-3zM16 19h1v1h-1zM18 19h1v1h-1zM21 19h1v1h-1zM23 19h1v1h-1zM25 19h3v1h-3zM29 19h1v1h-1zM32 19h2v1h-2zM38 19h4v1h-4zM45 19h1v1h-1zM48 19h1v1h-1zM50 19h6v1h-6zM3 20h1v1h-1zM5 20h2v1h-2zM8 20h1v1h-1zM11 20h1v1h-1zM13 20h3v1h-3zM19 20h1v1h-1zM21 20h2v1h-2zM28 20h1v1h-1zM32 20h1v1h-1zM35 20h2v1h-2zM38 20h1v1h-1zM40 20h3v1h-3zM44 20h4v1h-4zM52 20h1v1h-1zM54 20h1v1h-1zM1 21h1v1h-1zM5 21h1v1h-1zM7 21h2v1h-2zM14 21h3v1h-3zM18 21h6v1h-6zM25 21h2v1h-2zM31 21h3v1h-3zM35 21h1v1h-1zM38 21h1v1h-1zM40 21h1v1h-1zM42 21h3v1h-3zM47 21h3v1h-3zM51 21h3v1h-3zM55 21h1v1h-1zM0 22h2v1h-2zM3 22h2v1h-2zM6 22h1v1h-1zM11 22h3v1h-3zM15 22h1v1h-1zM17 22h3v1h-3zM22 22h1v1h-1zM24 22h2v1h-2zM30 22h3v1h-3zM36 22h2v1h-2zM40 22h2v1h-2zM43 22h3v1h-3zM48 22h4v1h-4zM53 22h3v1h-3zM1 23h1v1h-1zM3 23h2v1h-2zM8 23h2v1h-2zM11 23h5v1h-5zM20 23h2v1h-2zM23 23h1v1h-1zM26 23h1v1h-1zM29 23h2v1h-2zM38 23h2v1h-2zM41 23h2v1h-2zM46 23h3v1h-3zM50 23h1v1h-1zM53 23h1v1h-1zM56 23h1v1h-1zM0 24h1v1h-1zM2 24h1v1h-1zM4 24h1v1h-1zM6 24h1v1h-1zM8 24h1v1h-1zM16 24h1v1h-1zM18 24h1v1h-1zM20 24h1v1h-1zM22 24h1v1h-1zM24 24h7v1h-7zM32 24h3v1h-3zM38 24h1v1h-1zM40 24h3v1h-3zM46 24h1v1h-1zM48 24h1v1h-1zM50 24h1v1h-1zM54 24h2v1h-2zM0 25h1v1h-1zM2 25h1v1h-1zM4 25h2v1h-2zM7 25h3v1h-3zM11 25h5v1h-5zM18 25h1v1h-1zM21 25h1v1h-1zM25 25h1v1h-1zM28 25h2v1h-2zM32 25h4v1h-4zM37 25h2v1h-2zM41 25h1v1h-1zM49 25h1v1h-1zM53 25h1v1h-1zM56 25h1v1h-1zM0 26h9v1h-9zM10 26h1v1h-1zM12 26h1v1h-1zM16 26h2v1h-2zM19 26h1v1h-1zM22 26h1v1h-1zM26 26h6v1h-6zM34 26h1v1h-1zM36 26h2v1h-2zM40 26h3v1h-3zM45 26h1v1h-1zM47 26h6v1h-6zM54 26h3v1h-3zM3 27h2v1h-2zM8 27h3v1h-3zM22 27h1v1h-1zM24 27h1v1h-1zM26 27h1v1h-1zM30 27h1v1h-1zM32 27h1v1h-1zM36 27h5v1h-5zM43 27h1v1h-1zM45 27h2v1h-2zM48 27h1v1h-1zM52 27h1v1h-1zM56 27h1v1h-1zM0 28h2v1h-2zM3 28h2v1h-2zM6 28h1v1h-1zM8 28h1v1h-1zM10 28h1v1h-1zM12 28h2v1h-2zM15 28h1v1h-1zM17 28h2v1h-2zM23 28h1v1h-1zM26 28h1v1h-1zM28 28h1v1h-1zM30 28h3v1h-3zM35 28h2v1h-2zM38 28h1v1h-1zM40 28h3v1h-3zM44 28h1v1h-1zM46 28h1v1h-1zM48 28h1v1h-1zM50 28h1v1h-1zM52 28h1v1h-1zM0 29h2v1h-2zM4 29h1v1h-1zM8 29h1v1h-1zM10 29h2v1h-2zM13 29h1v1h-1zM18 29h4v1h-4zM25 29h2v1h-2zM30 29h1v1h-1zM35 29h2v1h-2zM39 29h1v1h-1zM42 29h1v1h-1zM45 29h4v1h-4zM52 29h1v1h-1zM54 29h1v1h-1zM2 30h1v1h-1zM4 30h5v1h-5zM10 30h1v1h-1zM12 30h2v1h-2zM15 30h2v1h-2zM19 30h1v1h-1zM21 30h1v1h-1zM23 30h2v1h-2zM26 30h6v1h-6zM36 30h6v1h-6zM44 30h1v1h-1zM47 30h6v1h-6zM0 31h3v1h-3zM5 31h1v1h-1zM7 31h2v1h-2zM12 31h1v1h-1zM17 31h2v1h-2zM22 31h1v1h-1zM25 31h8v1h-8zM34 31h1v1h-1zM36 31h2v1h-2zM39 31h1v1h-1zM43 31h3v1h-3zM49 31h2v1h-2zM52 31h1v1h-1zM54 31h3v1h-3zM2 32h1v1h-1zM4 32h4v1h-4zM9 32h4v1h-4zM14 32h1v1h-1zM16 32h1v1h-1zM19 32h6v1h-6zM28 32h2v1h-2zM31 32h1v1h-1zM33 32h1v1h-1zM35 32h1v1h-1zM37 32h3v1h-3zM42 32h2v1h-2zM45 32h1v1h-1zM47 32h2v1h-2zM51 32h3v1h-3zM55 32h2v1h-2zM0 33h1v1h-1zM5 33h1v1h-1zM8 33h1v1h-1zM10 33h1v1h-1zM12 33h1v1h-1zM15 33h2v1h-2zM18 33h1v1h-1zM20 33h2v1h-2zM23 33h3v1h-3zM27 33h1v1h-1zM29 33h1v1h-1zM31 33h1v1h-1zM35 33h1v1h-1zM37 33h1v1h-1zM39 33h1v1h-1zM42 33h1v1h-1zM46 33h1v1h-1zM48 33h4v1h-4zM53 33h2v1h-2zM56 33h1v1h-1zM0 34h1v1h-1zM5 34h2v1h-2zM8 34h3v1h-3zM12 34h4v1h-4zM18 34h1v1h-1zM21 34h1v1h-1zM24 34h2v1h-2zM28 34h1v1h-1zM31 34h4v1h-4zM40 34h1v1h-1zM44 34h2v1h-2zM47 34h1v1h-1zM49 34h2v1h-2zM52 34h2v1h-2zM4 35h1v1h-1zM8 35h1v1h-1zM12 35h1v1h-1zM14 35h1v1h-1zM16 35h2v1h-2zM19 35h1v1h-1zM23 35h2v1h-2zM26 35h8v1h-8zM39 35h1v1h-1zM41 35h1v1h-1zM44 35h4v1h-4zM49 35h1v1h-1zM51 35h2v1h-2zM54 35h1v1h-1zM56 35h1v1h-1zM0 36h1v1h-1zM2 36h1v1h-1zM4 36h7v1h-7zM12 36h2v1h-2zM16 36h3v1h-3zM27 36h1v1h-1zM31 36h1v1h-1zM33 36h1v1h-1zM36 36h1v1h-1zM39 36h1v1h-1zM43 36h3v1h-3zM47 36h2v1h-2zM50 36h2v1h-2zM54 36h3v1h-3zM0 37h2v1h-2zM4 37h1v1h-1zM10 37h2v1h-2zM13 37h2v1h-2zM16 37h1v1h-1zM24 37h2v1h-2zM27 37h1v1h-1zM31 37h3v1h-3zM38 37h2v1h-2zM42 37h1v1h-1zM45 37h2v1h-2zM50 37h1v1h-1zM56 37h1v1h-1zM0 38h2v1h-2zM4 38h3v1h-3zM8 38h1v1h-1zM11 38h2v1h-2zM14 38h1v1h-1zM16 38h2v1h-2zM21 38h2v1h-2zM24 38h1v1h-1zM29 38h3v1h-3zM33 38h3v1h-3zM40 38h2v1h-2zM43 38h1v1h-1zM45 38h4v1h-4zM51 38h4v1h-4zM1 39h1v1h-1zM3 39h2v1h-2zM7 39h1v1h-1zM10 39h1v1h-1zM13 39h1v1h-1zM15 39h2v1h-2zM18 39h2v1h-2zM21 39h1v1h-1zM23 39h4v1h-4zM28 39h1v1h-1zM30 39h1v1h-1zM32 39h4v1h-4zM37 39h6v1h-6zM44 39h2v1h-2zM47 39h2v1h-2zM50 39h2v1h-2zM54 39h2v1h-2zM0 40h1v1h-1zM2 40h1v1h-1zM5 40h3v1h-3zM9 40h1v1h-1zM12 40h2v1h-2zM15 40h1v1h-1zM17 40h1v1h-1zM20 40h1v1h-1zM22 40h1v1h-1zM25 40h4v1h-4zM30 40h1v1h-1zM32 40h1v1h-1zM34 40h1v1h-1zM36 40h5v1h-5zM42 40h2v1h-2zM48 40h3v1h-3zM53 40h2v1h-2zM0 41h1v1h-1zM2 41h1v1h-1zM4 41h2v1h-2zM9 41h8v1h-8zM18 41h1v1h-1zM22 41h2v1h-2zM25 41h2v1h-2zM29 41h2v1h-2zM33 41h3v1h-3zM37 41h1v1h-1zM40 41h1v1h-1zM42 41h1v1h-1zM45 41h2v1h-2zM48 41h1v1h-1zM54 41h2v1h-2zM0 42h1v1h-1zM3 42h1v1h-1zM5 42h2v1h-2zM8 42h1v1h-1zM13 42h7v1h-7zM22 42h2v1h-2zM25 42h1v1h-1zM27 42h2v1h-2zM30 42h1v1h-1zM32 42h1v1h-1zM36 42h1v1h-1zM39 42h1v1h-1zM42 42h7v1h-7zM50 42h7v1h-7zM0 43h1v1h-1zM3 43h1v1h-1zM7 43h4v1h-4zM12 43h1v1h-1zM18 43h4v1h-4zM24 43h2v1h-2zM29 43h1v1h-1zM33 43h2v1h-2zM36 43h2v1h-2zM39 43h1v1h-1zM41 43h2v1h-2zM49 43h4v1h-4zM54 43h1v1h-1zM56 43h1v1h-1zM0 44h1v1h-1zM2 44h6v1h-6zM11 44h2v1h-2zM15 44h3v1h-3zM21 44h3v1h-3zM25 44h5v1h-5zM37 44h1v1h-1zM40 44h1v1h-1zM43 44h1v1h-1zM45 44h2v1h-2zM48 44h2v1h-2zM51 44h2v1h-2zM54 44h1v1h-1zM56 44h1v1h-1zM2 45h3v1h-3zM7 45h1v1h-1zM9 45h2v1h-2zM12 45h2v1h-2zM15 45h1v1h-1zM17 45h1v1h-1zM20 45h4v1h-4zM28 45h1v1h-1zM31 45h1v1h-1zM33 45h2v1h-2zM38 45h1v1h-1zM40 45h4v1h-4zM45 45h2v1h-2zM48 45h1v1h-1zM55 45h1v1h-1zM0 46h1v1h-1zM4 46h3v1h-3zM9 46h1v1h-1zM11 46h1v1h-1zM14 46h1v1h-1zM17 46h3v1h-3zM22 46h3v1h-3zM26 46h1v1h-1zM28 46h1v1h-1zM30 46h2v1h-2zM37 46h3v1h-3zM43 46h2v1h-2zM47 46h3v1h-3zM51 46h1v1h-1zM54 46h3v1h-3zM2 47h4v1h-4zM7 47h3v1h-3zM11 47h3v1h-3zM15 47h2v1h-2zM18 47h2v1h-2zM21 47h1v1h-1zM26 47h1v1h-1zM33 47h2v1h-2zM39 47h1v1h-1zM44 47h1v1h-1zM46 47h4v1h-4zM51 47h6v1h-6zM0 48h1v1h-1zM2 48h2v1h-2zM5 48h5v1h-5zM13 48h1v1h-1zM16 48h2v1h-2zM20 48h1v1h-1zM22 48h1v1h-1zM24 48h8v1h-8zM33 48h3v1h-3zM39 48h1v1h-1zM43 48h1v1h-1zM46 48h9v1h-9zM8 49h1v1h-1zM10 49h3v1h-3zM16 49h1v1h-1zM19 49h4v1h-4zM24 49h1v1h-1zM26 49h1v1h-1zM30 49h1v1h-1zM32 49h1v1h-1zM34 49h1v1h-1zM38 49h1v1h-1zM41 49h2v1h-2zM45 49h4v1h-4zM52 49h1v1h-1zM54 49h3v1h-3zM0 50h7v1h-7zM10 50h2v1h-2zM13 50h1v1h-1zM15 50h1v1h-1zM17 50h1v1h-1zM19 50h2v1h-2zM22 50h1v1h-1zM24 50h1v1h-1zM26 50h1v1h-1zM28 50h1v1h-1zM30 50h1v1h-1zM34 50h6v1h-6zM42 50h1v1h-1zM44 50h1v1h-1zM46 50h1v1h-1zM48 50h1v1h-1zM50 50h1v1h-1zM52 50h3v1h-3zM56 50h1v1h-1zM0 51h1v1h-1zM6 51h1v1h-1zM10 51h1v1h-1zM13 51h3v1h-3zM17 51h1v1h-1zM19 51h1v1h-1zM21 51h2v1h-2zM24 51h3v1h-3zM30 51h2v1h-2zM34 51h1v1h-1zM36 51h4v1h-4zM41 51h1v1h-1zM43 51h6v1h-6zM52 51h3v1h-3zM56 51h1v1h-1zM0 52h1v1h-1zM2 52h3v1h-3zM6 52h1v1h-1zM8 52h1v1h-1zM10 52h1v1h-1zM12 52h2v1h-2zM22 52h3v1h-3zM26 52h6v1h-6zM34 52h1v1h-1zM36 52h4v1h-4zM43 52h1v1h-1zM45 52h1v1h-1zM48 52h5v1h-5zM56 52h1v1h-1zM0 53h1v1h-1zM2 53h3v1h-3zM6 53h1v1h-1zM8 53h1v1h-1zM11 53h1v1h-1zM13 53h1v1h-1zM15 53h1v1h-1zM18 53h3v1h-3zM26 53h2v1h-2zM29 53h1v1h-1zM34 53h2v1h-2zM38 53h5v1h-5zM45 53h3v1h-3zM50 53h2v1h-2zM54 53h1v1h-1zM56 53h1v1h-1zM0 54h1v1h-1zM2 54h3v1h-3zM6 54h1v1h-1zM8 54h2v1h-2zM11 54h3v1h-3zM15 54h1v1h-1zM18 54h2v1h-2zM22 54h4v1h-4zM27 54h2v1h-2zM31 54h2v1h-2zM35 54h1v1h-1zM38 54h1v1h-1zM40 54h2v1h-2zM43 54h1v1h-1zM45 54h1v1h-1zM48 54h1v1h-1zM50 54h2v1h-2zM53 54h2v1h-2zM56 54h1v1h-1zM0 55h1v1h-1zM6 55h1v1h-1zM11 55h3v1h-3zM15 55h2v1h-2zM19 55h1v1h-1zM22 55h2v1h-2zM25 55h1v1h-1zM30 55h2v1h-2zM33 55h1v1h-1zM35 55h4v1h-4zM42 55h3v1h-3zM48 55h3v1h-3zM52 55h3v1h-3zM56 55h1v1h-1zM0 56h7v1h-7zM9 56h2v1h-2zM12 56h1v1h-1zM16 56h1v1h-1zM18 56h1v1h-1zM20 56h2v1h-2zM23 56h1v1h-1zM25 56h1v1h-1zM27 56h1v1h-1zM31 56h1v1h-1zM34 56h2v1h-2zM37 56h1v1h-1zM39 56h3v1h-3zM44 56h1v1h-1zM46 56h1v1h-1zM49 56h2v1h-2zM52 56h1v1h-1zM54 56h2v1h-2z"/></svg>
<h5 class="t" style="top:521.21px;font-size:11.20px;line-height:17px;color:#1b2030;left:248.00px;letter-spacing:0.336px;">Item Summary</h5>
<small class="t" style="top:539.80px;font-size:8.96px;line-height:13px;color:#3a4358;left:248.00px;letter-spacing:0.206px;">All items here cannot be deleted.</small>
<div class="tbl" role="table">
<div style="position:absolute;left:228.00px;top:561.00px;width:1668.00px;height:53.00px;background:#ededf0;"></div>
<div style="position:absolute;left:228.00px;top:669.00px;width:1668.00px;height:55.50px;background:#ededf0;"></div>
<div role="row">
<b class="t" style="top:578.80px;font-size:11.20px;line-height:17px;font-weight:700;color:#1b2030;left:248.00px;letter-spacing:1.000px;">#</b>
<b class="t" style="top:578.80px;font-size:11.20px;line-height:17px;font-weight:700;color:#1b2030;left:298.50px;letter-spacing:0.465px;">Item Type</b>
<b class="t" style="top:578.80px;font-size:11.20px;line-height:17px;font-weight:700;color:#1b2030;left:422.50px;letter-spacing:0.785px;">Item</b>
<b class="t" style="top:578.80px;font-size:11.20px;line-height:17px;font-weight:700;color:#1b2030;left:669.00px;letter-spacing:0.561px;">Quantity</b>
<b class="t" style="top:578.80px;font-size:11.20px;line-height:17px;font-weight:700;color:#1b2030;left:783.00px;letter-spacing:0.340px;">Rate</b>
<b class="t" style="top:578.80px;font-size:11.20px;line-height:17px;font-weight:700;color:#1b2030;left:857.00px;letter-spacing:0.205px;">Discount</b>
<b class="t" style="top:578.80px;font-size:11.20px;line-height:17px;font-weight:700;color:#1b2030;left:971.00px;letter-spacing:0.422px;">Tax</b>
<b class="t" style="top:578.80px;font-size:11.20px;line-height:17px;font-weight:700;color:#1b2030;left:1228.50px;letter-spacing:0.253px;">Description</b>
<b class="t" style="top:571.00px;font-size:11.20px;line-height:17px;font-weight:700;color:#1b2030;left:1705.50px;letter-spacing:0.103px;">Price</b>
<small class="t" style="top:589.80px;font-size:8.96px;line-height:13px;font-weight:700;color:#ff3a6e;left:1705.50px;letter-spacing:0.231px;">After discount &amp; tax</small>
</div>
<div role="row">
<span class="t" style="top:633.00px;font-size:11.20px;line-height:17px;color:#3a4358;left:248.00px;letter-spacing:0.172px;">1</span>
<span class="t" style="top:633.00px;font-size:11.20px;line-height:17px;color:#3a4358;left:298.50px;letter-spacing:0.362px;">Product</span>
<span class="t" style="top:633.00px;font-size:11.20px;line-height:17px;color:#3a4358;left:422.50px;letter-spacing:0.147px;">Gear Assembly</span>
<span class="t" style="top:633.00px;font-size:11.20px;line-height:17px;color:#3a4358;left:669.00px;letter-spacing:0.172px;">3</span>
<span class="t" style="top:633.00px;font-size:11.20px;line-height:17px;color:#3a4358;left:783.00px;letter-spacing:0.176px;">$100</span>
<span class="t" style="top:633.00px;font-size:11.20px;line-height:17px;color:#3a4358;left:857.00px;letter-spacing:0.172px;">$0</span>
<div style="position:absolute;left:971.00px;top:623.00px;width:130.00px;height:36.50px;background:#fafafc;border-top:1px solid #f1f1f4;border-bottom:1px solid #f1f1f4;box-sizing:border-box;"></div>
<span class="t" style="top:633.00px;font-size:11.20px;line-height:17px;color:#3a4358;left:991.00px;transform:scaleX(0.9325);transform-origin:0 50%;">GST (10%)</span>
<span class="t" style="top:633.00px;font-size:11.20px;line-height:17px;color:#3a4358;left:1062.00px;letter-spacing:0.177px;">$30</span>
<span class="t" style="top:633.00px;font-size:11.20px;line-height:17px;color:#3a4358;left:1228.50px;letter-spacing:0.194px;">Replacement gear assembly for Model-X1 machines</span>
<span class="t" style="top:633.00px;font-size:11.20px;line-height:17px;color:#3a4358;left:1705.50px;letter-spacing:0.176px;">$330</span>
</div>
<div role="row">
<span class="t" style="top:689.00px;font-size:11.20px;line-height:17px;color:#3a4358;left:248.00px;letter-spacing:0.172px;">2</span>
<span class="t" style="top:689.00px;font-size:11.20px;line-height:17px;color:#3a4358;left:298.50px;letter-spacing:0.362px;">Product</span>
<span class="t" style="top:689.00px;font-size:11.20px;line-height:17px;color:#3a4358;left:422.50px;letter-spacing:0.183px;">Conveyor Belt</span>
<span class="t" style="top:689.00px;font-size:11.20px;line-height:17px;color:#3a4358;left:669.00px;letter-spacing:0.172px;">5</span>
<span class="t" style="top:689.00px;font-size:11.20px;line-height:17px;color:#3a4358;left:783.00px;letter-spacing:0.176px;">$200</span>
<span class="t" style="top:689.00px;font-size:11.20px;line-height:17px;color:#3a4358;left:857.00px;letter-spacing:0.172px;">$0</span>
<div style="position:absolute;left:971.00px;top:679.00px;width:136.00px;height:36.50px;background:#e9e8ed;border-top:1px solid #ededf0;border-bottom:1px solid #ededf0;box-sizing:border-box;"></div>
<span class="t" style="top:689.00px;font-size:11.20px;line-height:17px;color:#3a4358;left:991.00px;transform:scaleX(0.9325);transform-origin:0 50%;">GST (10%)</span>
<span class="t" style="top:689.00px;font-size:11.20px;line-height:17px;color:#3a4358;left:1062.00px;letter-spacing:0.176px;">$100</span>
<span class="t" style="top:689.00px;font-size:11.20px;line-height:17px;color:#3a4358;left:1228.50px;letter-spacing:0.276px;">Durable conveyor belt for Model-Z9 machines</span>
<span class="t" style="top:689.00px;font-size:11.20px;line-height:17px;color:#3a4358;left:1705.50px;letter-spacing:0.112px;">$1,100</span>
</div>
<div role="row">
<span class="t" style="top:744.21px;font-size:11.20px;line-height:17px;color:#3a4358;left:248.00px;letter-spacing:0.172px;">3</span>
<span class="t" style="top:744.21px;font-size:11.20px;line-height:17px;color:#3a4358;left:298.50px;letter-spacing:-0.038px;">Service</span>
<span class="t" style="top:744.21px;font-size:11.20px;line-height:17px;color:#3a4358;left:422.50px;letter-spacing:0.211px;">Replaced worn-out gears</span>
<span class="t" style="top:744.21px;font-size:11.20px;line-height:17px;color:#3a4358;left:669.00px;letter-spacing:0.172px;">2</span>
<span class="t" style="top:744.21px;font-size:11.20px;line-height:17px;color:#3a4358;left:783.00px;letter-spacing:0.177px;">$40</span>
<span class="t" style="top:744.21px;font-size:11.20px;line-height:17px;color:#3a4358;left:857.00px;letter-spacing:0.172px;">$0</span>
<div style="position:absolute;left:971.00px;top:734.00px;width:124.00px;height:36.50px;background:#fafafc;border-top:1px solid #f1f1f4;border-bottom:1px solid #f1f1f4;box-sizing:border-box;"></div>
<span class="t" style="top:744.21px;font-size:11.20px;line-height:17px;color:#3a4358;left:991.00px;transform:scaleX(0.9325);transform-origin:0 50%;">GST (10%)</span>
<span class="t" style="top:744.21px;font-size:11.20px;line-height:17px;color:#3a4358;left:1062.00px;letter-spacing:0.172px;">$8</span>
<span class="t" style="top:744.21px;font-size:11.20px;line-height:17px;color:#3a4358;left:1228.50px;letter-spacing:0.211px;">Replaced worn-out gears</span>
<span class="t" style="top:744.21px;font-size:11.20px;line-height:17px;color:#3a4358;left:1705.50px;letter-spacing:0.177px;">$88</span>
</div>
<div style="position:absolute;left:228.00px;top:780.00px;width:1668.00px;height:1.00px;background:#efeff1;"></div>
<div style="position:absolute;left:228.00px;top:816.00px;width:1668.00px;height:1.00px;background:#efeff1;"></div>
<div style="position:absolute;left:228.00px;top:851.00px;width:1668.00px;height:1.00px;background:#efeff1;"></div>
<div style="position:absolute;left:228.00px;top:887.00px;width:1668.00px;height:1.00px;background:#efeff1;"></div>
<div style="position:absolute;left:228.00px;top:923.00px;width:1668.00px;height:1.00px;background:#efeff1;"></div>
<div style="position:absolute;left:228.00px;top:958.00px;width:1668.00px;height:1.00px;background:#efeff1;"></div>
<div style="position:absolute;left:228.00px;top:994.00px;width:1668.00px;height:1.00px;background:#efeff1;"></div>
<div style="position:absolute;left:228.00px;top:1030.00px;width:1668.00px;height:1.00px;background:#efeff1;"></div>
<div style="position:absolute;left:228.00px;top:1066.00px;width:1668.00px;height:1.00px;background:#efeff1;"></div>
<div role="row">
<b class="t" style="top:790.00px;font-size:11.20px;line-height:17px;-webkit-text-stroke:0.30px;color:#293044;left:422.50px;letter-spacing:0.709px;">Total</b>
<b class="t" style="top:790.00px;font-size:11.20px;line-height:17px;-webkit-text-stroke:0.30px;color:#293044;left:669.00px;letter-spacing:0.172px;">10</b>
<b class="t" style="top:790.00px;font-size:11.20px;line-height:17px;-webkit-text-stroke:0.30px;color:#293044;left:783.00px;letter-spacing:0.176px;">$340</b>
<b class="t" style="top:790.00px;font-size:11.20px;line-height:17px;-webkit-text-stroke:0.30px;color:#293044;left:857.00px;letter-spacing:0.172px;">$0</b>
<b class="t" style="top:790.00px;font-size:11.20px;line-height:17px;-webkit-text-stroke:0.30px;color:#293044;left:971.00px;letter-spacing:0.176px;">$138</b>
</div>
<div role="row">
<b class="t" style="top:826.00px;font-size:11.20px;line-height:17px;-webkit-text-stroke:0.30px;color:#293044;left:1228.50px;letter-spacing:0.429px;">Sub Total</b>
<span class="t" style="top:826.00px;font-size:11.20px;line-height:17px;color:#3a4358;left:1705.50px;letter-spacing:0.112px;">$1,380</span>
</div>
<div role="row">
<b class="t" style="top:861.00px;font-size:11.20px;line-height:17px;-webkit-text-stroke:0.30px;color:#293044;left:1228.50px;letter-spacing:0.533px;">Discount</b>
<span class="t" style="top:861.00px;font-size:11.20px;line-height:17px;color:#3a4358;left:1705.50px;letter-spacing:0.172px;">$0</span>
</div>
<div role="row">
<b class="t" style="top:897.00px;font-size:11.20px;line-height:17px;-webkit-text-stroke:0.30px;color:#293044;left:1228.50px;transform:scaleX(0.8954);transform-origin:0 50%;">GST</b>
<span class="t" style="top:897.00px;font-size:11.20px;line-height:17px;color:#3a4358;left:1705.50px;letter-spacing:0.176px;">$138</span>
</div>
<div role="row">
<b class="t" style="top:933.00px;font-size:11.20px;line-height:17px;-webkit-text-stroke:0.30px;color:#293044;left:1228.50px;letter-spacing:0.177px;">Service Charge</b>
<span class="t" style="top:933.00px;font-size:11.20px;line-height:17px;color:#3a4358;left:1705.50px;letter-spacing:0.177px;">$50</span>
</div>
<div role="row">
<b class="t" style="top:968.00px;font-size:11.20px;line-height:17px;-webkit-text-stroke:0.30px;color:#293044;left:1228.50px;letter-spacing:0.709px;">Total</b>
<span class="t" style="top:968.00px;font-size:11.20px;line-height:17px;color:#3a4358;left:1705.50px;letter-spacing:0.112px;">$1,568</span>
</div>
<div role="row">
<b class="t" style="top:1004.00px;font-size:11.20px;line-height:17px;-webkit-text-stroke:0.30px;color:#293044;left:1228.50px;letter-spacing:0.262px;">Paid</b>
<span class="t" style="top:1004.00px;font-size:11.20px;line-height:17px;color:#3a4358;left:1705.50px;letter-spacing:0.176px;">$468</span>
</div>
<div role="row">
<b class="t" style="top:1040.00px;font-size:11.20px;line-height:17px;-webkit-text-stroke:0.30px;color:#293044;left:1228.50px;letter-spacing:0.411px;">Due</b>
<span class="t" style="top:1040.00px;font-size:11.20px;line-height:17px;color:#3a4358;left:1705.50px;letter-spacing:0.112px;">$1,100</span>
</div>
</div>
</section></main>
</body></html>
